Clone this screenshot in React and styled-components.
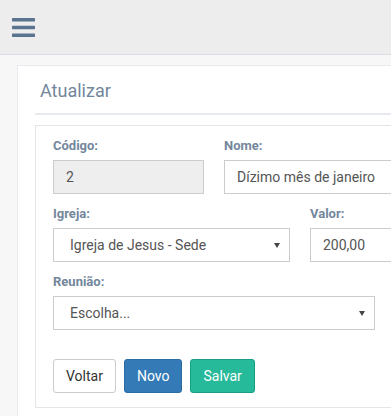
import React from 'react';
import styled, { createGlobalStyle } from 'styled-components';

const GlobalStyle = createGlobalStyle`
  body {
    margin: 0;
    overflow: hidden;
    background: #f7f7f7;
    font-family: Roboto, "Liberation Sans", Arial, sans-serif;
    color: #73879c;
  }
  * { box-sizing: border-box; }
`;

const TopNav = styled.div`
  height: 55px;
  background: #ededed;
  border-bottom: 1px solid #d9dee4;
  display: flex;
  align-items: center;
  padding-left: 12px;
`;

const Toggle = styled.button`
  border: 0;
  background: none;
  padding: 0;
  display: flex;
  cursor: pointer;
`;

const Main = styled.div`
  padding: 10px 0 0 17px;
`;

const Panel = styled.div`
  width: 420px;
  min-height: 400px;
  background: #fff;
  border: 1px solid #e6e9ed;
  padding: 10px 17px;
`;

const PanelTitle = styled.div`
  border-bottom: 2px solid #e6e9ed;
  padding: 0 5px;
  height: 39px;
  margin-bottom: 10px;

  h2 {
    margin: 0;
    padding-top: 2px;
    font-size: 18px;
    line-height: 26px;
    font-weight: 400;
    color: #73879c;
  }
`;

const FormBox = styled.div`
  width: 380px;
  border: 1px solid #e5e5e5;
  padding: 11px 17px 14px;
`;

const Row = styled.div`
  display: flex;
  gap: 20px;
  margin-bottom: 11px;
`;

const Field = styled.div`
  width: ${({ $w }) => $w}px;
  flex: none;
`;

const Label = styled.label`
  display: block;
  font-size: 13px;
  line-height: 18px;
  font-weight: 700;
  color: #73879c;
  margin-bottom: 5px;
`;

const Input = styled.input`
  display: block;
  width: 100%;
  height: 34px;
  border: 1px solid #ccc;
  border-radius: 0;
  padding: 6px 12px;
  font-family: inherit;
  font-size: 14px;
  color: #555;
  background: ${({ readOnly }) => (readOnly ? '#eee' : '#fff')};
  outline: none;
`;

const SelectWrap = styled.div`
  position: relative;
`;

const Select = styled.select`
  display: block;
  width: 100%;
  height: 34px;
  border: 1px solid #ccc;
  border-radius: 0;
  padding: 6px 30px 6px 16px;
  font-family: inherit;
  font-size: 14px;
  color: #555;
  background: #fff;
  appearance: none;
  outline: none;
`;

const Caret = styled.span`
  position: absolute;
  right: 10px;
  top: 15px;
  width: 0;
  height: 0;
  border-left: 3px solid transparent;
  border-right: 3px solid transparent;
  border-top: 5px solid #444;
  pointer-events: none;
`;

const Actions = styled.div`
  display: flex;
  gap: 8px;
  margin-top: 29px;
`;

const Button = styled.button`
  height: 34px;
  padding: 0 12px;
  border-radius: 3px;
  font-family: inherit;
  font-size: 14px;
  border: 1px solid ${({ $border }) => $border};
  background: ${({ $bg }) => $bg};
  color: ${({ $fg }) => $fg};
  cursor: pointer;
`;

const MenuIcon = () => (
  <svg width="23" height="19" viewBox="0 0 23 19">
    <rect x="0" y="0" width="23" height="3.4" rx="0.6" fill="#5a738e" />
    <rect x="0" y="7.8" width="23" height="3.4" rx="0.6" fill="#5a738e" />
    <rect x="0" y="15.6" width="23" height="3.4" rx="0.6" fill="#5a738e" />
  </svg>
);

const SelectField = ({ value, options }) => (
  <SelectWrap>
    <Select defaultValue={value}>
      {options.map((o) => (
        <option key={o}>{o}</option>
      ))}
    </Select>
    <Caret />
  </SelectWrap>
);

export default function App() {
  return (
    <>
      <GlobalStyle />
      <TopNav>
        <Toggle aria-label="menu">
          <MenuIcon />
        </Toggle>
      </TopNav>
      <Main>
        <Panel>
          <PanelTitle>
            <h2>Atualizar</h2>
          </PanelTitle>
          <FormBox>
            <Row>
              <Field $w={151}>
                <Label>Código:</Label>
                <Input readOnly defaultValue="2" />
              </Field>
              <Field $w={200}>
                <Label>Nome:</Label>
                <Input defaultValue="Dízimo mês de janeiro" />
              </Field>
            </Row>
            <Row>
              <Field $w={237}>
                <Label>Igreja:</Label>
                <SelectField value="Igreja de Jesus - Sede" options={['Igreja de Jesus - Sede']} />
              </Field>
              <Field $w={110}>
                <Label>Valor:</Label>
                <Input defaultValue="200,00" />
              </Field>
            </Row>
            <Row>
              <Field $w={322}>
                <Label>Reunião:</Label>
                <SelectField value="Escolha..." options={['Escolha...']} />
              </Field>
            </Row>
            <Actions>
              <Button $bg="#fff" $border="#ccc" $fg="#333">Voltar</Button>
              <Button $bg="#337ab7" $border="#2e6da4" $fg="#fff">Novo</Button>
              <Button $bg="#26b99a" $border="#169f85" $fg="#fff">Salvar</Button>
            </Actions>
          </FormBox>
        </Panel>
      </Main>
    </>
  );
}
